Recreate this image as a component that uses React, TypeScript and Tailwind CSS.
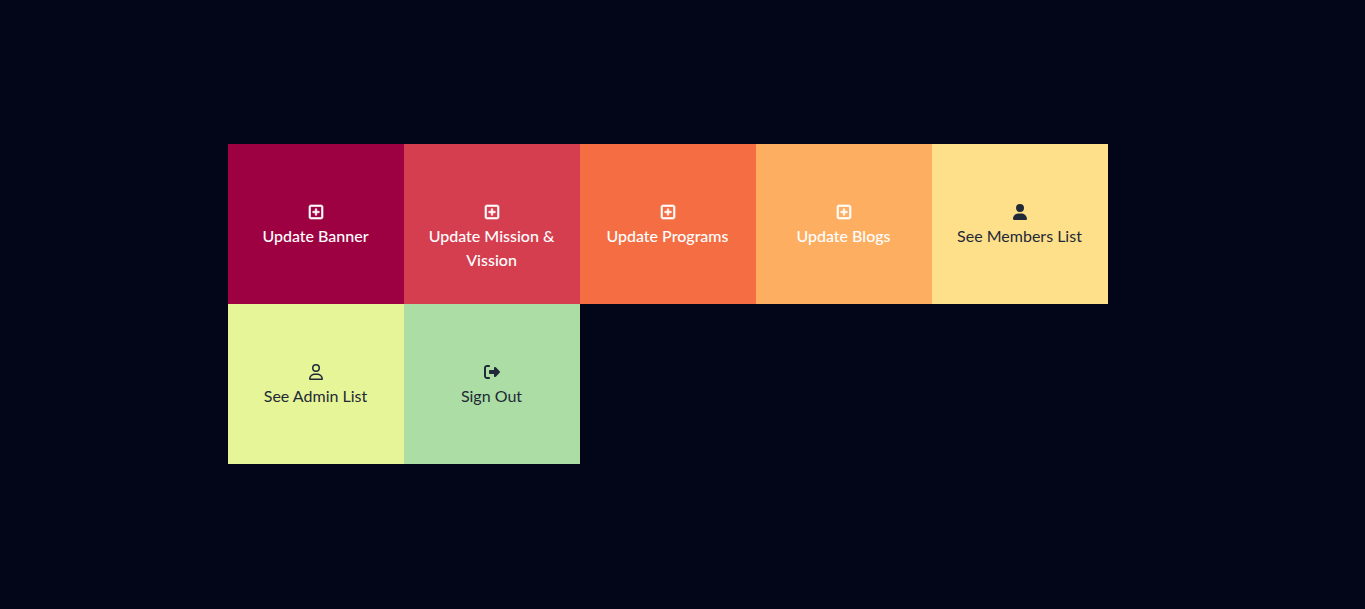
import { FaRegSquarePlus, FaRegUser, FaRightFromBracket, FaUser } from "react-icons/fa6";
import type { IconType } from "react-icons";

type Tile = { label: string; Icon: IconType; tone: string; iconTone?: string };

const boldIcon = "stroke-current stroke-[20]";

const tiles: Tile[] = [
  { label: "Update Banner", Icon: FaRegSquarePlus, iconTone: boldIcon, tone: "bg-[#9e0142] text-white font-medium" },
  { label: "Update Mission & Vission", Icon: FaRegSquarePlus, iconTone: boldIcon, tone: "bg-[#d53e4f] text-white font-medium" },
  { label: "Update Programs", Icon: FaRegSquarePlus, iconTone: boldIcon, tone: "bg-[#f46d43] text-white font-medium" },
  { label: "Update Blogs", Icon: FaRegSquarePlus, iconTone: boldIcon, tone: "bg-[#fdae61] text-white font-medium" },
  { label: "See Members List", Icon: FaUser, tone: "bg-[#fee08b] text-[#1f2937]" },
  { label: "See Admin List", Icon: FaRegUser, tone: "bg-[#e6f598] text-[#1f2937]" },
  { label: "Sign Out", Icon: FaRightFromBracket, tone: "bg-[#abdda4] text-[#1f2937]" },
];

export default function App() {
  return (
    <main className="flex min-h-screen items-center justify-center bg-slate-950 pr-[30px] pb-[2px] font-['Lato',sans-serif] text-base">
      <nav aria-label="Dashboard" className="grid w-full max-w-[880px] grid-cols-5">
        {tiles.map(({ label, Icon, tone, iconTone = "" }) => (
          <button key={label} type="button" className={`flex h-40 cursor-pointer flex-col items-center px-4 pt-14 ${tone}`}>
            <span className="flex h-6 items-center">
              <Icon className={`size-4 ${iconTone}`} aria-hidden />
            </span>
            <span>{label}</span>
          </button>
        ))}
      </nav>
    </main>
  );
}
